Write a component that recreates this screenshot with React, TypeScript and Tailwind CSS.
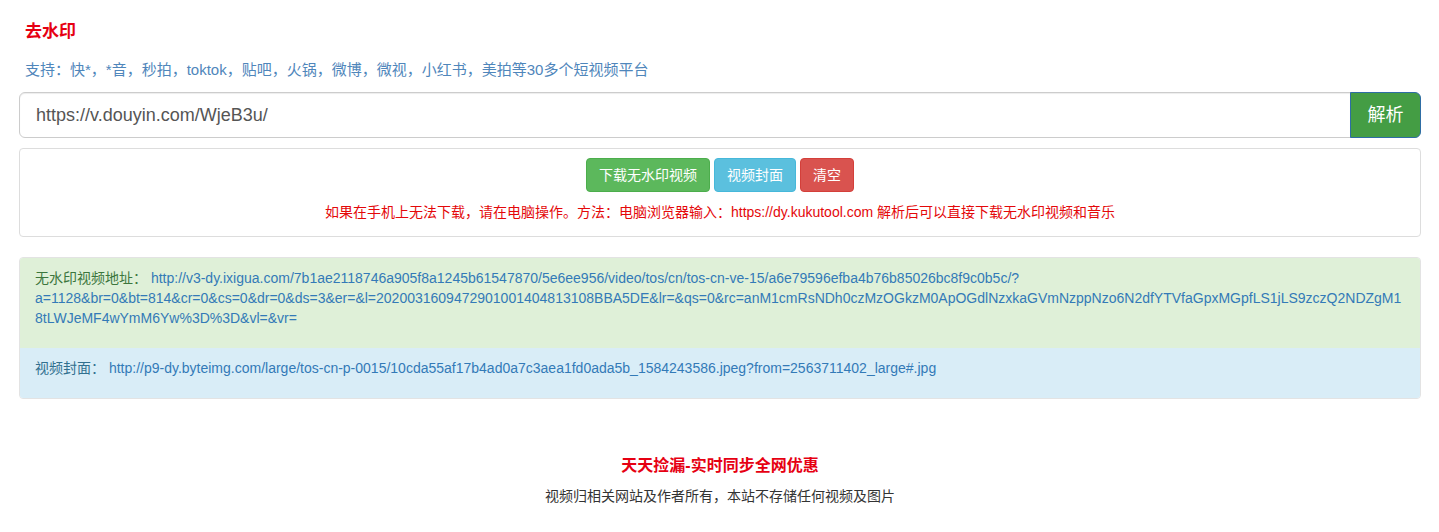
import React from "react";

const cjk = { fontFamily: '"Liberation Sans", "Noto Sans CJK SC", sans-serif' };

export default function App() {
  return (
    <div className="bg-white pl-[19px] pr-[18px] text-[14px] leading-[20px] text-[#333]" style={cjk}>
      <div className="pl-[6px] pt-[20px] text-[17px] leading-[24px] font-bold text-[#e60012]">去水印</div>
      <div className="pl-[6px] mt-[16px] text-[15px] leading-[20px] text-[#4f86bb]">
        支持：快*，*音，秒拍，toktok，贴吧，火锅，微博，微视，小红书，美拍等30多个短视频平台
      </div>
      <div className="mt-[12px] flex">
        <input
          readOnly
          value="https://v.douyin.com/WjeB3u/"
          className="h-[46px] flex-1 rounded-l-[6px] border border-[#ccc] px-[16px] text-[18px] text-[#555] outline-none shadow-[inset_0_1px_1px_rgba(0,0,0,0.075)]"
          style={cjk}
        />
        <button className="h-[46px] w-[71px] rounded-r-[6px] border border-[#2e6da4] bg-[#449d44] text-[18px] text-white -ml-px">
          解析
        </button>
      </div>
      <div className="mt-[10px] rounded-[4px] border border-[#ddd] px-[15px] pt-[9px] pb-[14px] text-center">
        <div className="flex justify-center gap-[4px]">
          <button className="h-[34px] rounded-[4px] border border-[#4cae4c] bg-[#5cb85c] px-[12px] text-[14px] text-white">下载无水印视频</button>
          <button className="h-[34px] rounded-[4px] border border-[#46b8da] bg-[#5bc0de] px-[12px] text-[14px] text-white">视频封面</button>
          <button className="h-[34px] rounded-[4px] border border-[#d43f3a] bg-[#d9534f] px-[12px] text-[14px] text-white">清空</button>
        </div>
        <div className="mt-[10px] text-[14px] leading-[20px] text-[#e4080a]">
          如果在手机上无法下载，请在电脑操作。方法：电脑浏览器输入：https://dy.kukutool.com 解析后可以直接下载无水印视频和音乐
        </div>
      </div>
      <div className="mt-[20px] overflow-hidden rounded-[4px] border border-[#e3e3e3]">
        <div className="bg-[#dff0d8] px-[15px] pt-[10px] pb-[20px] text-[#3c763d] break-words">
          无水印视频地址：{" "}
          <a className="text-[#337ab7]">
            http://v3-dy.ixigua.com/7b1ae2118746a905f8a1245b61547870/5e6ee956/video/tos/cn/tos-cn-ve-15/a6e79596efba4b76b85026bc8f9c0b5c/?a=1128&amp;br=0&amp;bt=814&amp;cr=0&amp;cs=0&amp;dr=0&amp;ds=3&amp;er=&amp;l=2020031609472901001404813108BBA5DE&amp;lr=&amp;qs=0&amp;rc=anM1cmRsNDh0czMzOGkzM0ApOGdlNzxkaGVmNzppNzo6N2dfYTVfaGpxMGpfLS1jLS9zczQ2NDZgM18tLWJeMF4wYmM6Yw%3D%3D&amp;vl=&amp;vr=
          </a>
        </div>
        <div className="bg-[#d9edf7] px-[15px] pt-[10px] pb-[20px] text-[#31708f] break-words">
          视频封面：{" "}
          <a className="text-[#337ab7]">
            http://p9-dy.byteimg.com/large/tos-cn-p-0015/10cda55af17b4ad0a7c3aea1fd0ada5b_1584243586.jpeg?from=2563711402_large#.jpg
          </a>
        </div>
      </div>
      <div className="mt-[56px] text-center text-[16px] leading-[22px] font-bold text-[#e60012]">天天捡漏-实时同步全网优惠</div>
      <div className="mt-[9px] pb-[20px] text-center text-[14px] leading-[20px] text-[#333]">
        视频归相关网站及作者所有，本站不存储任何视频及图片
      </div>
    </div>
  );
}
